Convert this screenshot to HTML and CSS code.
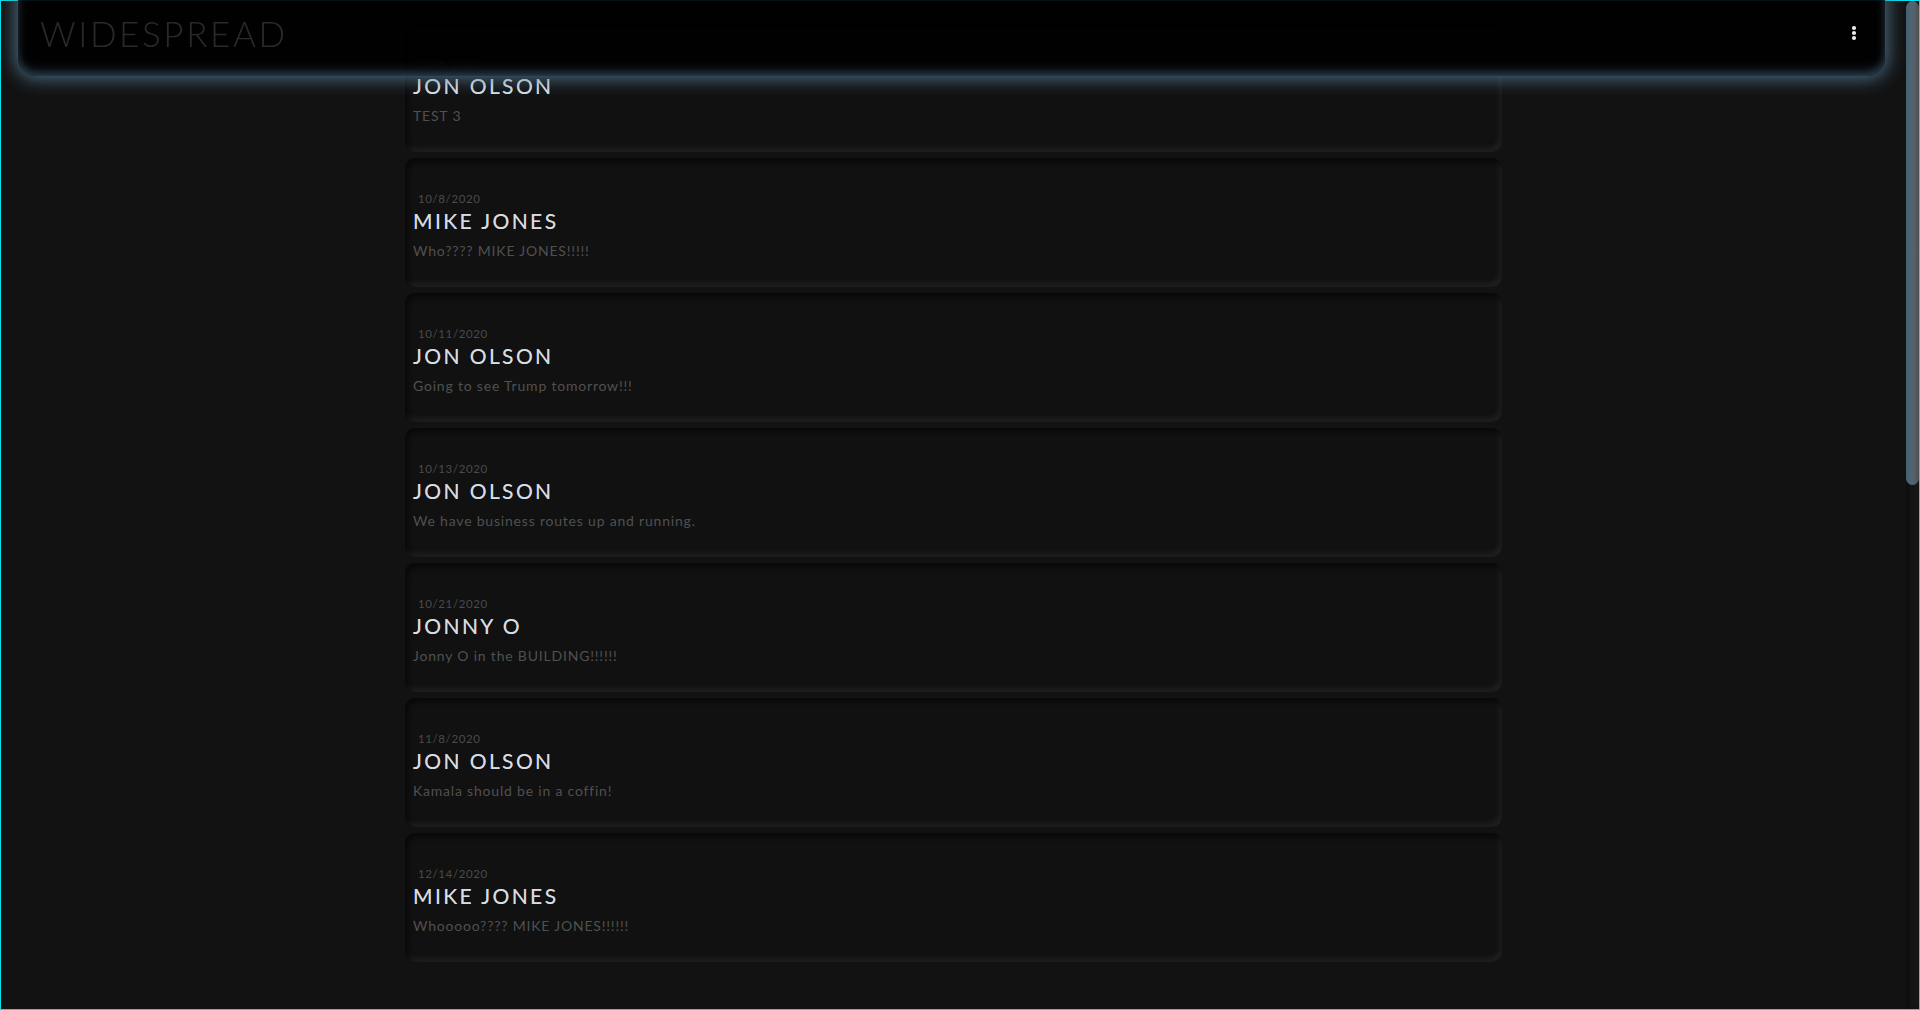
FILE: index.html
```html
<!DOCTYPE html>
<html lang="en">
<head>
<meta charset="utf-8">
<title>Widespread</title>
<link rel="stylesheet" href="styles.css">
</head>
<body>
<div class="frame">
  <div class="viewport">
    <header class="topbar">
      <h1 class="brand">WIDESPREAD</h1>
      <button class="kebab" aria-label="menu">
        <svg width="6" height="16" viewBox="0 0 6 16"><circle cx="3" cy="3" r="2.1" fill="#e4ecf2"/><circle cx="3" cy="8" r="2.1" fill="#e4ecf2"/><circle cx="3" cy="13" r="2.1" fill="#e4ecf2"/></svg>
      </button>
    </header>
    <main class="feed">
      <article class="post"><div class="date">10/8/2020</div><h2 class="name">JON OLSON</h2><p class="msg">TEST 3</p></article>
      <article class="post"><div class="date">10/8/2020</div><h2 class="name">MIKE JONES</h2><p class="msg">Who???? MIKE JONES!!!!!</p></article>
      <article class="post"><div class="date">10/11/2020</div><h2 class="name">JON OLSON</h2><p class="msg">Going to see Trump tomorrow!!!</p></article>
      <article class="post"><div class="date">10/13/2020</div><h2 class="name">JON OLSON</h2><p class="msg">We have business routes up and running.</p></article>
      <article class="post"><div class="date">10/21/2020</div><h2 class="name">JONNY O</h2><p class="msg">Jonny O in the BUILDING!!!!!!</p></article>
      <article class="post"><div class="date">11/8/2020</div><h2 class="name">JON OLSON</h2><p class="msg">Kamala should be in a coffin!</p></article>
      <article class="post"><div class="date">12/14/2020</div><h2 class="name">MIKE JONES</h2><p class="msg">Whooooo???? MIKE JONES!!!!!!</p></article>
    </main>
  </div>
  <div class="scrollbar"><div class="thumb"></div></div>
</div>
</body>
</html>
```
FILE: styles.css
```css
html, body {
  margin: 0;
  padding: 0;
  height: 100%;
  overflow: hidden;
  background: #121212;
}
body {
  font-family: "Lato", "Open Sans", sans-serif;
}
.frame {
  box-sizing: border-box;
  height: 100vh;
  border: 1px solid #00e3ec;
  display: flex;
  background: #121212;
}
.viewport {
  flex: 1;
  overflow: hidden;
}
.scrollbar {
  width: 13px;
  background: #161616;
  box-shadow: inset 3px 0 4px #0d0d0d;
  display: flex;
  flex-direction: column;
}
.thumb {
  height: 484px;
  border-radius: 7px;
  background: linear-gradient(to right, #495f6e 0%, #4d6575 45%, #566068 65%, #4f4f4f 100%);
}
.topbar {
  position: fixed;
  top: -20px;
  left: 18px;
  width: 1867px;
  height: 96px;
  box-sizing: border-box;
  background: rgba(0, 0, 0, 0.92);
  border-radius: 18px;
  box-shadow: 0 0 18px 3px rgba(88, 128, 156, 0.8), inset 0 -7px 12px -4px rgba(75, 110, 135, 0.6), inset 0 0 10px rgba(60, 90, 110, 0.35);
  display: flex;
  align-items: center;
  justify-content: space-between;
  padding: 10px 28px 0 22px;
  z-index: 10;
}
.brand {
  margin: 0;
  font-family: "Lato", sans-serif;
  font-weight: 300;
  font-size: 35px;
  letter-spacing: 2.6px;
  color: #2a2a2a;
  line-height: 1;
}
.kebab {
  background: none;
  border: 0;
  padding: 0;
  display: flex;
  align-items: center;
  cursor: pointer;
}
.feed {
  width: 1097px;
  margin: 0 auto;
  padding: 22px 0 0;
  display: flex;
  flex-direction: column;
  gap: 6px;
}
.post {
  box-sizing: border-box;
  height: 129px;
  padding: 34px 8px 0 8px;
  background: #111111;
  border-radius: 10px;
  box-shadow: inset 3px 4px 5px #090909, inset -3px -4px 5px #1f1f1f;
}
.date {
  font-size: 11.5px;
  line-height: 14px;
  letter-spacing: 0.6px;
  color: #4a4a4a;
  padding-left: 5px;
}
.name {
  margin: 0;
  margin-top: 2px;
  font-weight: 400;
  font-size: 21px;
  line-height: 25px;
  letter-spacing: 2.4px;
  color: #d8dde2;
  text-shadow: 0 0 0.5px rgba(216, 221, 226, 0.6);
}
.msg {
  margin: 9px 0 0;
  font-size: 14px;
  line-height: 18px;
  letter-spacing: 0.8px;
  color: #505050;
}
```
